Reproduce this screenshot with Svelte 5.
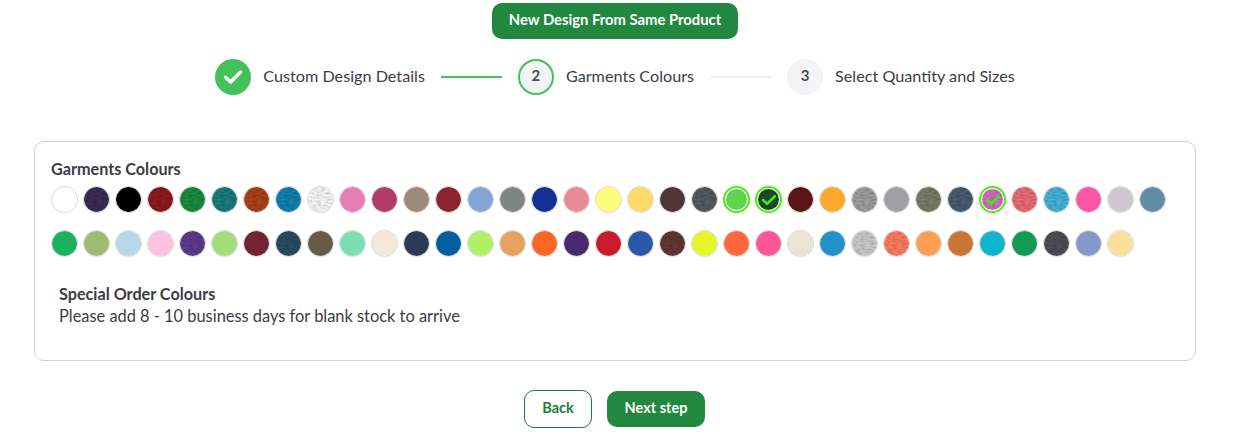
<script>
    const rowOne = [
        { c: '#ffffff' }, { c: '#3a2d55', h: true }, { c: '#000000' }, { c: '#8c1d24', h: true },
        { c: '#1e8a3c', h: true }, { c: '#1f7a7a', h: true }, { c: '#a8431e', h: true }, { c: '#1480b0', h: true },
        { c: '#f4f4f4', h: true }, { c: '#e87db5' }, { c: '#b23a68' }, { c: '#9c8a7a' },
        { c: '#8c2430' }, { c: '#82a4d6' }, { c: '#7f8583' }, { c: '#142f96' },
        { c: '#e98b96' }, { c: '#fdfd7c' }, { c: '#fdd968' }, { c: '#4f3634' },
        { c: '#555a60', h: true }, { c: '#69cc62', on: true }, { c: '#1e4526', on: true }, { c: '#5b1518' },
        { c: '#fba92c' }, { c: '#9a9c9e', h: true }, { c: '#9da1a3' }, { c: '#747c66', h: true },
        { c: '#495c72', h: true }, { c: '#d06ac0', h: true, on: true }, { c: '#e86a76', h: true }, { c: '#44b0d4', h: true },
        { c: '#fb55a5' }, { c: '#cfc7cf' }, { c: '#618ca6' }
    ];
    const rowTwo = [
        { c: '#1ab25f' }, { c: '#9fba72' }, { c: '#b8d8ea' }, { c: '#fcc2de' },
        { c: '#5c3e8c', h: true }, { c: '#a5dc7c' }, { c: '#722435' }, { c: '#2a4e60', h: true },
        { c: '#645c46' }, { c: '#7adfb4' }, { c: '#f3e9da' }, { c: '#2a3c55' },
        { c: '#055ea0' }, { c: '#b0ef66' }, { c: '#e6a25c' }, { c: '#fc6625' },
        { c: '#4a2a6e' }, { c: '#cb1a2c' }, { c: '#2a58a8' }, { c: '#603836', h: true },
        { c: '#e3f626' }, { c: '#fe663c' }, { c: '#fc5598' }, { c: '#e9e4d4' },
        { c: '#2193ca' }, { c: '#c8c8c8', h: true }, { c: '#fa7c5e', h: true }, { c: '#fe9f58' },
        { c: '#c97533' }, { c: '#10b5cb' }, { c: '#159a56' }, { c: '#4c4f53', h: true },
        { c: '#8598c9' }, { c: '#fadf9d' }
    ];
</script>

<svg class="defs" width="0" height="0" aria-hidden="true">
    <filter id="heather" x="0" y="0" width="100%" height="100%">
        <feTurbulence type="fractalNoise" baseFrequency="0.22 0.5" numOctaves="2" seed="4" result="noise" />
        <feColorMatrix in="noise" type="matrix" values="0 0 0 0 0  0 0 0 0 0  0 0 0 0 0  0.7 0 0 0 -0.25" result="shade" />
        <feComposite in="shade" in2="SourceAlpha" operator="in" result="grain" />
        <feMerge>
            <feMergeNode in="SourceGraphic" />
            <feMergeNode in="grain" />
        </feMerge>
    </filter>
</svg>

<main>
    <div class="top">
        <button class="btn solid wide">New Design From Same Product</button>
    </div>

    <ol class="steps">
        <li class="step">
            <span class="circle done">
                <svg width="20" height="16" viewBox="0 0 20 16" fill="none">
                    <path d="M2.5 8.2 L7.6 13 L17.5 3" stroke="#fff" stroke-width="3.4" stroke-linecap="round" stroke-linejoin="round" />
                </svg>
            </span>
            <span class="label">Custom Design Details</span>
        </li>
        <li class="line active"></li>
        <li class="step">
            <span class="circle current">2</span>
            <span class="label">Garments Colours</span>
        </li>
        <li class="line"></li>
        <li class="step">
            <span class="circle">3</span>
            <span class="label">Select Quantity and Sizes</span>
        </li>
    </ol>

    <section class="card">
        <h2>Garments Colours</h2>
        {#each [rowOne, rowTwo] as row}
            <div class="swatches">
                {#each row as s}
                    <span class="swatch" class:on={s.on}>
                        <span class="fill" class:heather={s.h} style="background: {s.c}"></span>
                        {#if s.on}
                            <svg class="tick" width="15" height="12" viewBox="0 0 14 11" fill="none">
                                <path d="M1.5 5.5 L5.2 9 L12.5 2" stroke="#3fee0c" stroke-width="2.4" stroke-linecap="round" stroke-linejoin="round" />
                            </svg>
                        {/if}
                    </span>
                {/each}
            </div>
        {/each}

        <div class="special">
            <h3>Special Order Colours</h3>
            <p>Please add 8 - 10 business days for blank stock to arrive</p>
        </div>
    </section>

    <div class="actions">
        <button class="btn outline">Back</button>
        <button class="btn solid">Next step</button>
    </div>
</main>

<style>
    :global(body) {
        background: #fff;
    }

    .defs {
        position: absolute;
    }

    main {
        width: 1230px;
        height: 447px;
        padding-top: 3px;
        box-sizing: border-box;
        font-family: 'Lato', sans-serif;
        color: #3c3c43;
        font-size: 16.2px;
    }

    .top {
        display: flex;
        justify-content: center;
    }

    .btn {
        height: 36px;
        padding: 0 0 4px;
        border-radius: 10px;
        border: none;
        font-family: inherit;
        font-size: 14.5px;
        font-weight: 700;
        cursor: pointer;
    }

    .solid {
        width: 98px;
        background: #23883f;
        color: #fff;
    }

    .wide {
        width: 246px;
        font-size: 14.8px;
    }

    .outline {
        width: 68px;
        height: 38px;
        background: #fff;
        color: #1e7a3a;
        border: 1.5px solid #1e7a3a;
    }

    .steps {
        list-style: none;
        display: flex;
        justify-content: center;
        align-items: center;
        margin: 20px 0 0;
        padding: 0;
    }

    .step {
        display: flex;
        align-items: center;
        gap: 12px;
    }

    .circle {
        width: 36px;
        height: 36px;
        box-sizing: border-box;
        padding-bottom: 4px;
        border-radius: 50%;
        display: flex;
        align-items: center;
        justify-content: center;
        background: #f3f4f6;
        font-size: 15px;
        font-weight: 700;
        color: #4b4b52;
    }

    .done {
        padding: 0;
        background: #43c15b;
    }

    .current {
        border: 2px solid #43c15b;
    }

    .label {
        white-space: nowrap;
        padding-bottom: 4px;
    }

    .line {
        width: 61px;
        height: 2px;
        margin: 0 16px;
        background: #e9eeee;
    }

    .line.active {
        background: #43c15b;
    }

    .card {
        width: 1162px;
        height: 220px;
        box-sizing: border-box;
        margin: 46px 0 0 34px;
        padding: 17px 16px 0;
        border: 1px solid #d0d0d0;
        border-radius: 10px;
    }

    h2,
    h3 {
        margin: 0;
        font-size: 16.2px;
        font-weight: 700;
        line-height: 20px;
    }

    .swatches {
        display: flex;
        gap: 5px;
        margin-top: 7px;
        margin-bottom: 17px;
    }

    .swatch {
        position: relative;
        flex: none;
        width: 27px;
        height: 27px;
        box-sizing: border-box;
        border-radius: 50%;
        border: 1px solid #d2d2d2;
        overflow: hidden;
    }

    .swatch.on {
        border: 2px solid #42f00a;
        padding: 1px;
    }

    .fill {
        display: block;
        width: 100%;
        height: 100%;
        border-radius: 50%;
    }

    .heather {
        filter: url(#heather);
    }

    .tick {
        position: absolute;
        left: 50%;
        top: 50%;
        transform: translate(-50%, -50%);
    }

    .special {
        padding: 10px 8px 0;
    }

    .special p {
        margin: 0;
        font-size: 16.4px;
        line-height: 24px;
    }

    .actions {
        display: flex;
        justify-content: center;
        align-items: center;
        gap: 15px;
        margin-top: 29px;
        padding-right: 1px;
    }
</style>
